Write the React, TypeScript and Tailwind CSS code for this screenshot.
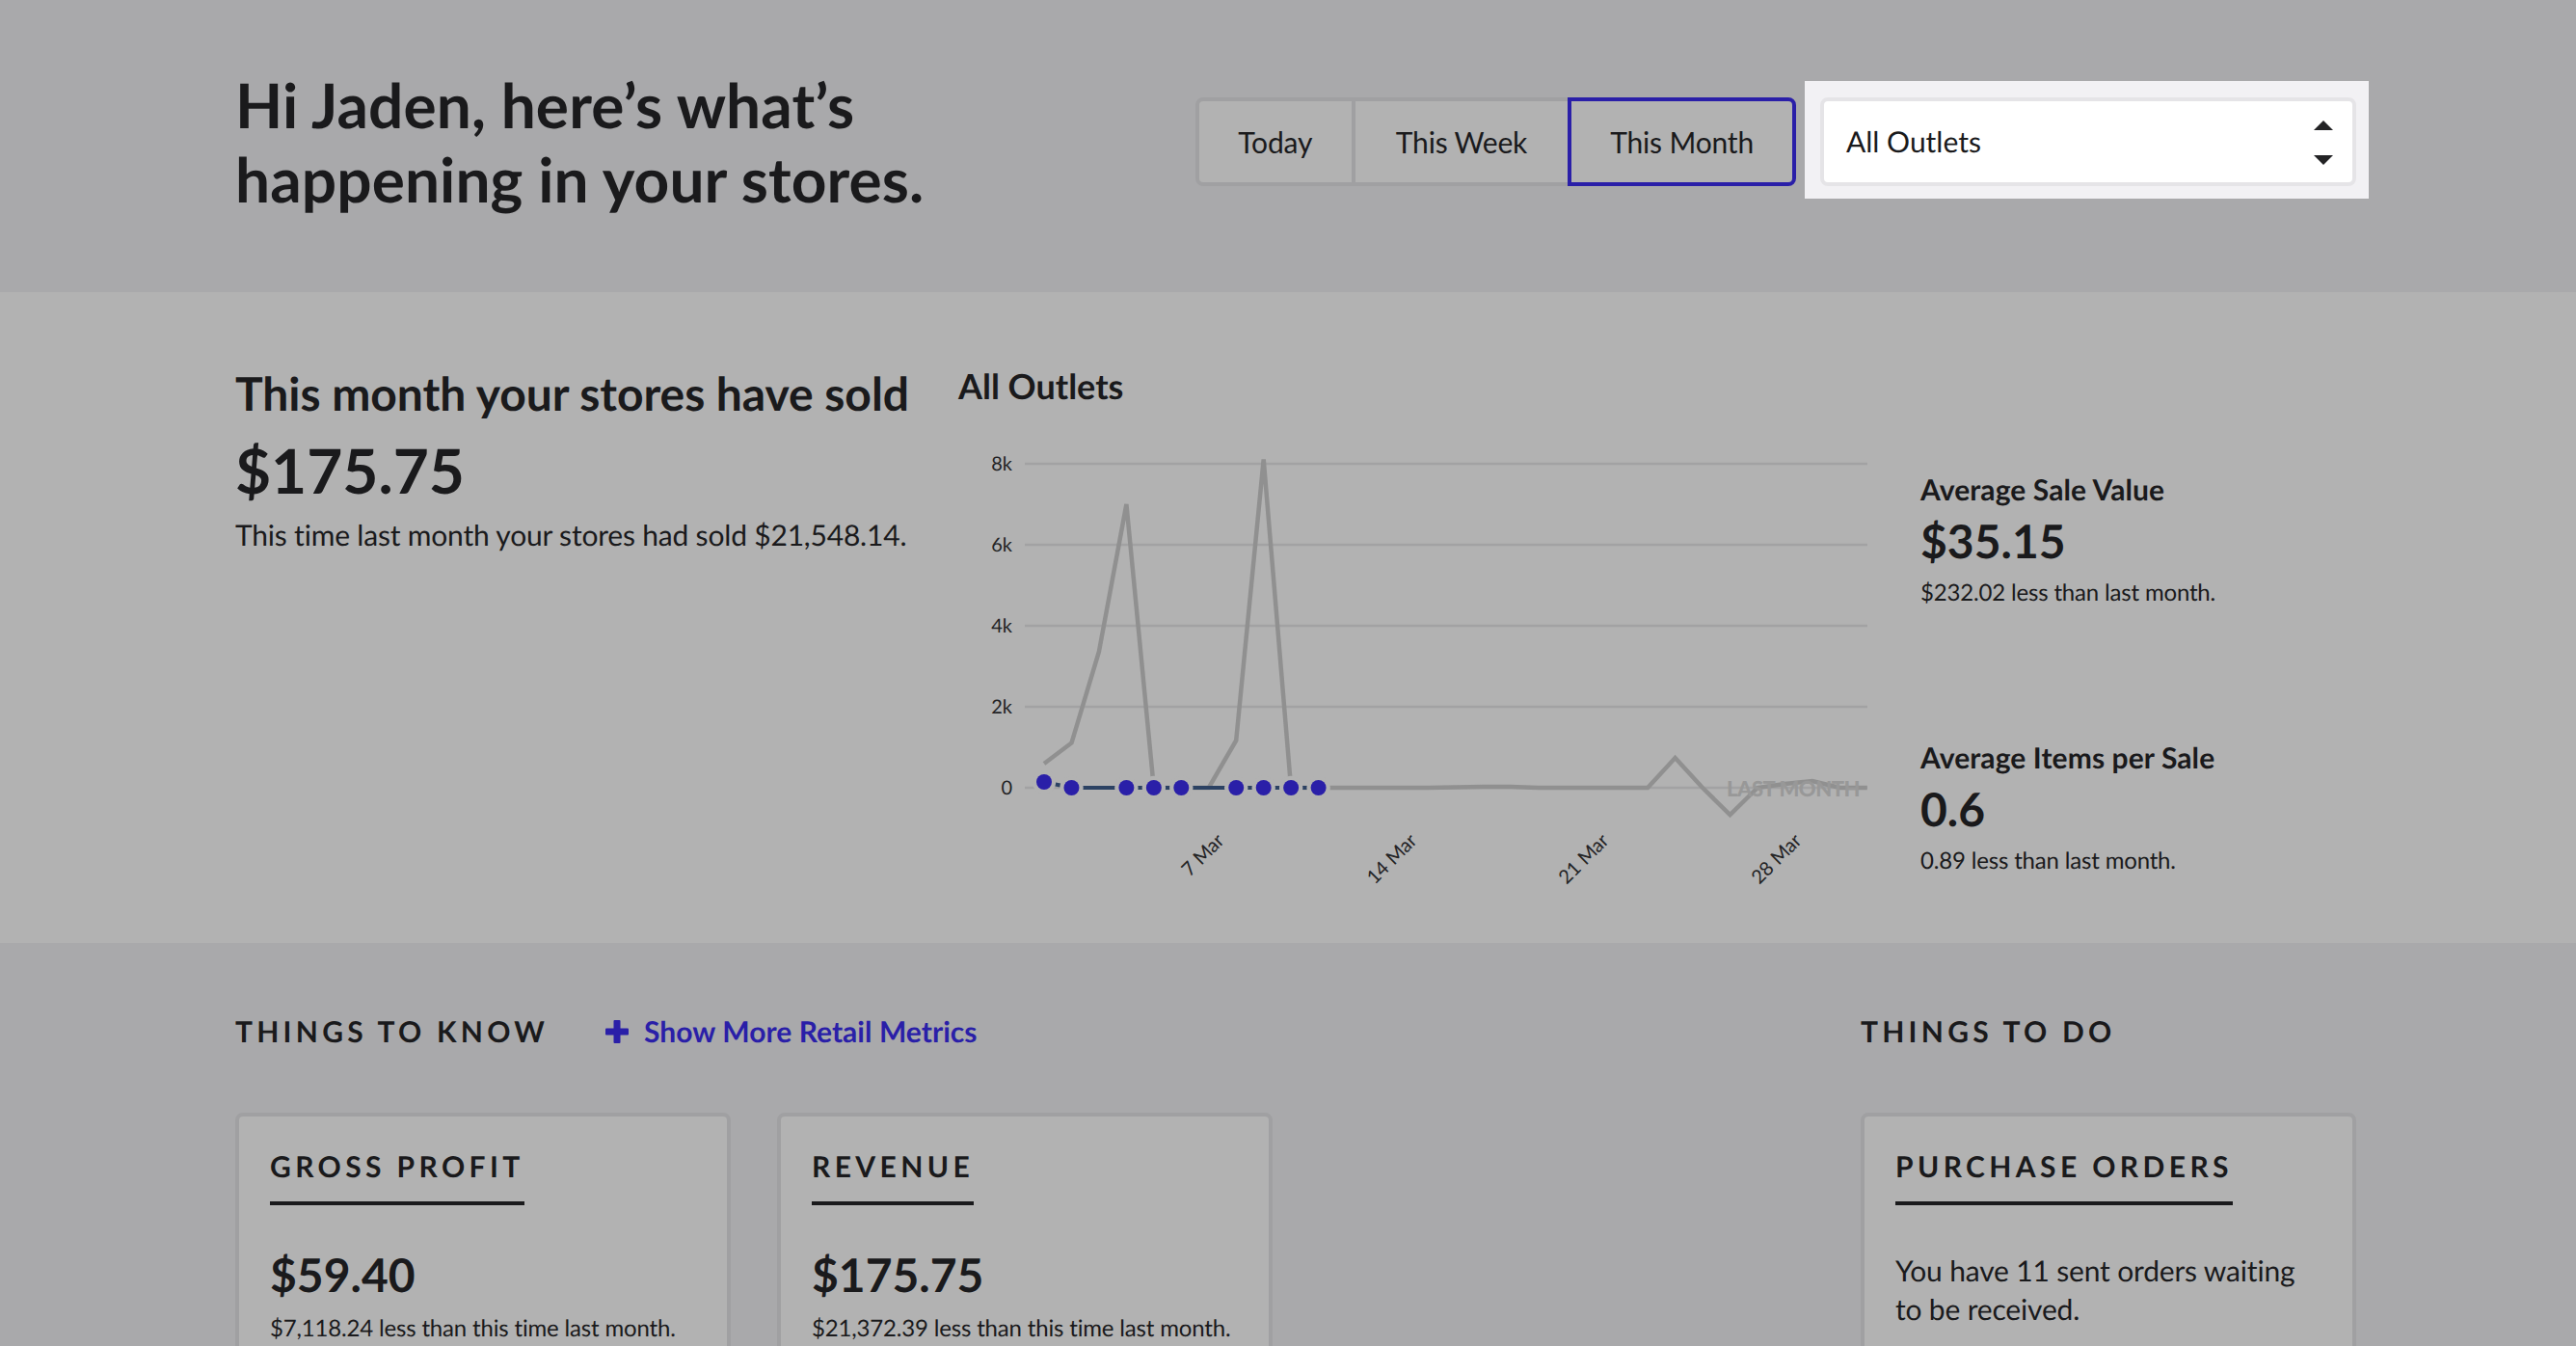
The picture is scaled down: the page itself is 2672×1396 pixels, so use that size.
const xs = (i: number) => 1083 + 28.46 * i;
const grayYs = [792, 770.5, 676, 523, 817, 817, 817, 768, 476.5, 817, 817, 817, 817, 817, 817, 816.5, 816, 816, 817, 817, 817, 817, 817, 786, 817, 845, 817, 813, 810, 817, 817];
const grayPts = grayYs.map((y, i) => `${xs(i).toFixed(1)},${y}`).join(" ");
const currentYs = [811, 817, 817, 817, 817, 817, 817, 817, 817, 817, 817];
const currentPts = currentYs.map((y, i) => `${xs(i).toFixed(1)},${y}`).join(" ");
const dotIdx = [0, 1, 3, 4, 5, 7, 8, 9, 10];

function Chart() {
  const grid = [
    [481, "8k"],
    [565, "6k"],
    [649, "4k"],
    [733, "2k"],
    [817, "0"],
  ] as const;
  const xLabels = [
    [1271, 873, "7 Mar"],
    [1471, 873, "14 Mar"],
    [1670, 873, "21 Mar"],
    [1870, 873, "28 Mar"],
  ] as const;
  return (
    <svg className="block overflow-visible" width={946} height={470} viewBox="994 460 946 470">
      {grid.map(([y, l]) => (
        <g key={l}>
          <line x1={1063} x2={1937} y1={y} y2={y} stroke="#a2a2a3" strokeWidth={2.5} />
          <text x={1050} y={y + 7} textAnchor="end" fontSize={20} fill="#232325" fontFamily="Lato, sans-serif">
            {l}
          </text>
        </g>
      ))}
      <polyline points={grayPts} fill="none" stroke="#909090" strokeWidth={4.5} strokeLinejoin="miter" />
      <text x={1791} y={826} fontSize={22} fontWeight={900} letterSpacing={-0.5} fill="#989898" fontFamily="Lato, sans-serif">
        LAST MONTH
      </text>
      <polyline points={currentPts} fill="none" stroke="#2c4263" strokeWidth={4} />
      {dotIdx.map((i) => (
        <circle key={`r${i}`} cx={xs(i)} cy={currentYs[i]} r={12.2} fill="#b2b2b2" />
      ))}
      {dotIdx.map((i) => (
        <circle key={i} cx={xs(i)} cy={currentYs[i]} r={8} fill="#2a1fa8" />
      ))}
      {xLabels.map(([x, y, l]) => (
        <text
          key={l}
          x={x}
          y={y}
          textAnchor="end"
          fontSize={20}
          fill="#232325"
          fontFamily="Lato, sans-serif"
          transform={`rotate(-45 ${x} ${y})`}
        >
          {l}
        </text>
      ))}
    </svg>
  );
}

function Stat({ title, value, sub, className }: { title: string; value: string; sub: string; className?: string }) {
  return (
    <div className={className}>
      <div className="text-[30px] leading-[34px] font-bold tracking-[0.1px]">{title}</div>
      <div className="mt-[8px] text-[48px] leading-[58px] font-bold">{value}</div>
      <div className="mt-[9px] text-[24px] leading-[29px] tracking-[-0.17px]">{sub}</div>
    </div>
  );
}

function Card({ title, children }: { title: string; children: React.ReactNode }) {
  return (
    <div className="h-[400px] w-[514px] shrink-0 rounded-lg border-4 border-[#a0a0a2] bg-[#b2b2b2] px-8 pt-[34px]">
      <div className="inline-block border-b-4 border-[#1a1a1c] pb-[18px] text-[30px] leading-[36px] font-bold tracking-[4.4px]">
        {title}
      </div>
      {children}
    </div>
  );
}

function Metric({ value, sub }: { value: string; sub: string }) {
  return (
    <>
      <div className="mt-[44px] text-[48px] leading-[58px] font-bold">{value}</div>
      <div className="mt-[11px] text-[24px] leading-[29px] tracking-[-0.17px]">{sub}</div>
    </>
  );
}

export default function App() {
  return (
    <div className="h-[1396px] overflow-hidden bg-[#a9a9ab] text-[#1a1a1c] [font-family:Lato,sans-serif] [text-rendering:geometricPrecision]">
      <header className="flex h-[303px] items-start justify-between pl-[244px] pr-[228px] pt-[71px]">
        <h1 className="text-[64px] leading-[76.8px] font-bold tracking-[0.09px]">
          Hi Jaden, here’s what’s
          <br />
          happening in your stores.
        </h1>
        <div className="mt-[30px] flex gap-[25px]">
          <div className="flex h-[92px] text-[30px] tracking-[-0.17px]">
            <button className="-mr-[2px] h-full rounded-l-lg border-4 border-[#a0a0a2] bg-[#b2b2b2] px-[40.5px]">Today</button>
            <button className="h-full border-y-4 border-r-4 border-l-2 border-[#a0a0a2] bg-[#b2b2b2] px-[42px]">This Week</button>
            <button className="-ml-[4px] h-full rounded-lg rounded-l-none border-4 border-[#2a1fa8] bg-[#b2b2b2] px-[40px]">This Month</button>
          </div>
          <div className="relative h-[92px] w-[556px]">
            <div className="absolute -top-[17px] -right-[13px] -bottom-[13px] -left-[16px] bg-[#f2f1f4]" />
            <div className="relative flex h-full items-center justify-between rounded-lg border-4 border-[#e5e4e7] bg-white pl-[23px] pr-[20px] text-[30px]">
              <span className="pt-[1px]">All Outlets</span>
              <svg className="mt-[2px]" width="20" height="46" viewBox="0 0 20 46" fill="#232325">
                <path d="M10 0 L20 10 H0 Z" />
                <path d="M0 36 H20 L10 46 Z" />
              </svg>
            </div>
          </div>
        </div>
      </header>

      <section className="flex h-[675px] bg-[#b2b2b2] pl-[244px]">
        <div className="w-[750px] shrink-0 pt-[77px]">
          <div className="text-[48px] leading-[58px] font-bold tracking-[-0.05px]">This month your stores have sold</div>
          <div className="mt-[11px] text-[64px] leading-[77px] font-bold">$175.75</div>
          <div className="mt-[12px] text-[30px] leading-[34px] tracking-[-0.19px]">This time last month your stores had sold $21,548.14.</div>
        </div>
        <div className="w-[998px] shrink-0 pt-[76px]">
          <div className="text-[36px] leading-[43px] font-bold">All Outlets</div>
          <div className="mt-[38px]">
            <Chart />
          </div>
        </div>
        <div className="pt-[188px]">
          <Stat title="Average Sale Value" value="$35.15" sub="$232.02 less than last month." />
          <Stat className="mt-[140px]" title="Average Items per Sale" value="0.6" sub="0.89 less than last month." />
        </div>
      </section>

      <section className="flex pl-[244px] pt-[74px]">
        <div className="w-[1686px] shrink-0">
          <div className="flex items-center">
            <h2 className="text-[30px] leading-[36px] font-bold tracking-[4.25px]">THINGS TO KNOW</h2>
            <span className="ml-[59px] flex items-center gap-[16px] text-[30px] leading-[36px] font-bold tracking-[0.05px] text-[#2a1fa8]">
              <svg width="24" height="24" viewBox="0 0 24 24" fill="#2a1fa8">
                <rect x="8.5" y="0" width="7" height="24" rx="1" />
                <rect x="0" y="8.5" width="24" height="7" rx="1" />
              </svg>
              Show More Retail Metrics
            </span>
          </div>
          <div className="mt-[66px] flex gap-[48px]">
            <Card title="GROSS PROFIT">
              <Metric value="$59.40" sub="$7,118.24 less than this time last month." />
            </Card>
            <Card title="REVENUE">
              <Metric value="$175.75" sub="$21,372.39 less than this time last month." />
            </Card>
          </div>
        </div>
        <div>
          <h2 className="text-[30px] leading-[36px] font-bold tracking-[4.25px]">THINGS TO DO</h2>
          <div className="mt-[66px]">
            <Card title="PURCHASE ORDERS">
              <p className="mt-[48px] text-[30px] leading-[40px] tracking-[-0.17px]">
                You have 11 sent orders waiting
                <br />
                to be received.
              </p>
            </Card>
          </div>
        </div>
      </section>
    </div>
  );
}
